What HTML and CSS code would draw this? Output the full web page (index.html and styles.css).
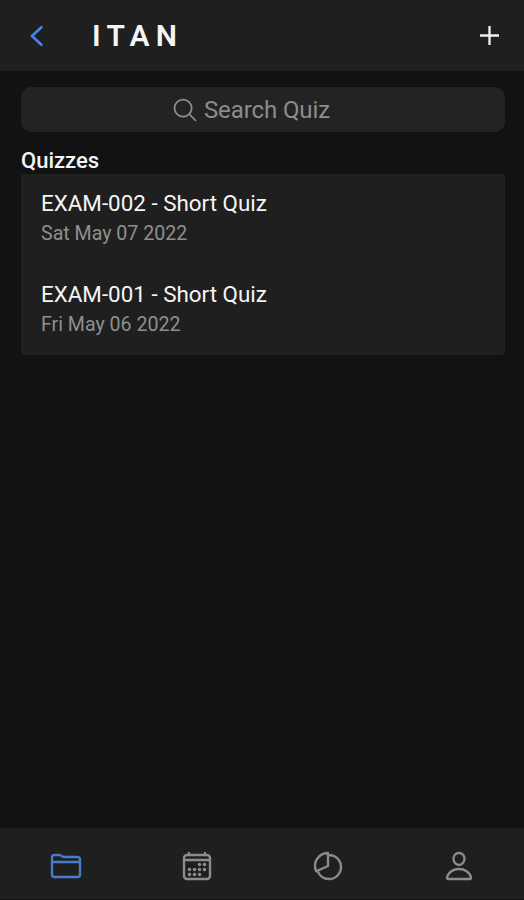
FILE: index.html
```html
<!DOCTYPE html>
<html lang="en">
<head>
  <meta charset="utf-8">
  <title>ITAN</title>
  <meta name="viewport" content="width=device-width, initial-scale=1">
  <link rel="stylesheet" href="styles.css">
</head>
<body>
  <header class="header">
    <button class="back" aria-label="Back">
      <svg viewBox="0 0 512 512" width="28" height="28"><path d="M336 96L164 256l172 160"/></svg>
    </button>
    <h1>ITAN</h1>
    <button class="add" aria-label="Add">
      <svg viewBox="0 0 512 512" width="27" height="27"><path d="M256 76v360M436 256H76"/></svg>
    </button>
  </header>
  <main class="content">
    <div class="search">
      <svg viewBox="0 0 512 512" width="28" height="28"><path d="M221 64a157 157 0 10157 157A157 157 0 00221 64zM338 338l110 110"/></svg>
      <span>Search Quiz</span>
    </div>
    <h2>Quizzes</h2>
    <ul class="list">
      <li>
        <h3>EXAM-002 - Short Quiz</h3>
        <p>Sat May 07 2022</p>
      </li>
      <li>
        <h3>EXAM-001 - Short Quiz</h3>
        <p>Fri May 06 2022</p>
      </li>
    </ul>
  </main>
  <nav class="tabs">
    <a class="tab active" aria-label="Quizzes">
      <svg viewBox="0 0 512 512" width="32" height="32"><path d="M440 432H72a40 40 0 01-40-40V120a40 40 0 0140-40h75.900a40 40 0 0122.200 6.700l27.800 18.600a40 40 0 0022.200 6.700H440a40 40 0 0140 40v240a40 40 0 01-40 40zM32 192h448"/></svg>
    </a>
    <a class="tab" aria-label="Calendar">
      <svg viewBox="0 0 512 512" width="32" height="32">
        <rect x="48" y="80" width="416" height="384" rx="48"/>
        <path d="M128 48v32M384 48v32M464 160H48"/>
        <g class="dots"><circle cx="296" cy="232" r="28"/><circle cx="376" cy="232" r="28"/><circle cx="296" cy="312" r="28"/><circle cx="376" cy="312" r="28"/><circle cx="136" cy="312" r="28"/><circle cx="216" cy="312" r="28"/><circle cx="136" cy="392" r="28"/><circle cx="216" cy="392" r="28"/><circle cx="296" cy="392" r="28"/></g>
      </svg>
    </a>
    <a class="tab" aria-label="Results">
      <svg viewBox="0 0 512 512" width="32" height="32"><path d="M256 80.600Q264 80 272 80c106 0 192 86 192 192s-86 192-192 192A192 192 0 0189 330.700M256 48C141 48 48 141 48 256a207 207 0 0018 85l190-85z"/></svg>
    </a>
    <a class="tab" aria-label="Profile">
      <svg viewBox="0 0 512 512" width="32" height="32"><path d="M344 144c-3.900 52.900-44 96-88 96s-84.200-43.100-88-96c-4-55 35-96 88-96s92 42 88 96zM256 304c-87 0-175.300 48-191.600 138.600-2 10.900 4.200 21.400 15.600 21.400h352c11.400 0 17.600-10.500 15.600-21.400C431.300 352 343 304 256 304z"/></svg>
    </a>
  </nav>
</body>
</html>
```
FILE: styles.css
```css
* {
  box-sizing: border-box;
}

body {
  margin: 0;
  height: 100vh;
  display: flex;
  flex-direction: column;
  background: #121212;
  color: #f5f5f5;
  font-family: Roboto, sans-serif;
}

h1, h2, h3, p, ul {
  margin: 0;
  padding: 0;
}

svg {
  display: block;
  fill: none;
  stroke: currentColor;
  stroke-width: 32;
  stroke-linecap: round;
  stroke-linejoin: round;
}

button {
  padding: 0;
  border: 0;
  background: none;
  color: #f0f0f0;
}

.header {
  display: flex;
  align-items: center;
  height: 71px;
  padding: 0 21px 0 23px;
  background: #1f1f1f;
}
.header h1 {
  flex: 1;
  margin-left: 41px;
  font-size: 30px;
  font-weight: 600;
  letter-spacing: 6.200px;
}
.back {
  color: #4384e6;
}
.back svg {
  stroke-width: 50;
}
.add svg {
  stroke-width: 44;
  stroke-linecap: butt;
}

.content {
  flex: 1;
  padding: 16px 19px 0 21px;
}
.search {
  display: flex;
  align-items: center;
  justify-content: center;
  gap: 5px;
  height: 45px;
  padding-right: 25px;
  border-radius: 10px;
  background: #232323;
  color: #8c8c8c;
  font-size: 24px;
}
.search span {
  letter-spacing: -0.100px;
}
.content h2 {
  margin-top: 15px;
  font-size: 22px;
  font-weight: 500;
  line-height: 27px;
}

.list {
  height: 181px;
  list-style: none;
  border-radius: 3px;
  background: #1f1f1f;
}
.list li {
  height: 90.500px;
  padding: 15px 20px 0;
}
.list h3 {
  font-size: 22.400px;
  font-weight: 400;
  line-height: 28px;
}
.list p {
  margin-top: 5px;
  color: #8f8f8f;
  font-size: 19.600px;
  line-height: 24px;
}

.tabs {
  display: flex;
  height: 72px;
  padding-top: 4px;
  padding-left: 1px;
  border-bottom: 1px solid #121212;
  background: #1f1f1f;
  color: #8c8c8c;
}
.tab {
  flex: 1;
  display: flex;
  align-items: center;
  justify-content: center;
}
.tab svg {
  stroke-width: 38;
}
.tab.active {
  color: #477ccd;
}
.tab .dots {
  fill: currentColor;
  stroke: none;
}
```
